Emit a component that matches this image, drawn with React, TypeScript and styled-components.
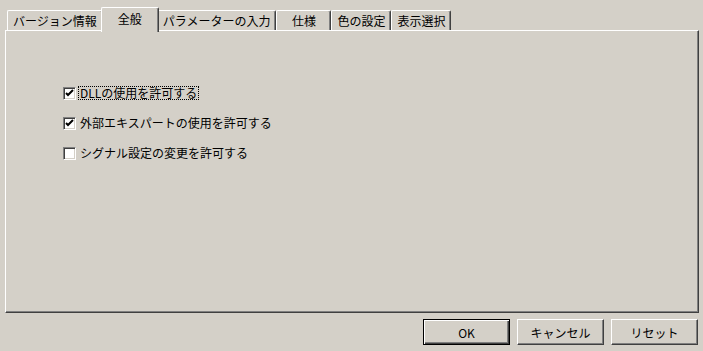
import React from "react";
import styled, { createGlobalStyle, css } from "styled-components";

const Global = createGlobalStyle`
  html, body { margin: 0; padding: 0; background: #d4d0c8; }
  body {
    font-family: "Noto Sans CJK JP", "Liberation Sans", sans-serif;
    font-size: 12px;
    color: #000;
  }
`;

const Frame = styled.div`
  width: 703px;
  height: 351px;
  box-sizing: border-box;
  padding: 7px 4px 0 5px;
  display: flex;
  flex-direction: column;
`;

const TabStrip = styled.div`
  display: flex;
  align-items: flex-end;
  height: 25px;
  padding-left: 2px;
  margin-bottom: -2px;
  position: relative;
  z-index: 1;
`;

const Tab = styled.div<{ $active?: boolean }>`
  box-sizing: border-box;
  min-width: 55px;
  padding: 0 5px;
  display: flex;
  align-items: center;
  justify-content: center;
  white-space: nowrap;
  background: #d4d0c8;
  border-top: 1px solid #fff;
  border-left: 1px solid #fff;
  border-right: 1px solid #404040;
  box-shadow: inset -1px 0 0 #808080;
  border-radius: 2px 2px 0 0;
  height: 20px;
  margin-bottom: 2px;
  line-height: 1;
  padding-top: 1px;
  ${(p) =>
    p.$active &&
    css`
      height: 25px;
      margin: 0 -2px;
      margin-bottom: 0;
      padding: 0 16px 3px;
      position: relative;
      z-index: 2;
    `}
`;

const Panel = styled.div`
  box-sizing: border-box;
  height: 283px;
  border: 1px solid;
  border-color: #fff #404040 #404040 #fff;
  box-shadow: inset -1px -1px 0 #808080;
  padding: 53px 0 0 57px;
  display: flex;
  flex-direction: column;
  gap: 12px;
`;

const Row = styled.label`
  display: flex;
  align-items: center;
  height: 18px;
  gap: 2px;
`;

const Box = styled.span`
  box-sizing: border-box;
  width: 13px;
  height: 13px;
  background: #fff;
  border-top: 1px solid #808080;
  border-left: 1px solid #808080;
  border-right: 1px solid #fff;
  border-bottom: 1px solid #fff;
  box-shadow: inset 1px 1px 0 #404040, inset -1px -1px 0 #d4d0c8;
  display: flex;
  align-items: center;
  justify-content: center;
`;

const Label = styled.span<{ $focused?: boolean }>`
  padding: 0 1px;
  line-height: 12px;
  border: 1px dotted ${(p) => (p.$focused ? "#000" : "transparent")};
`;

const Buttons = styled.div`
  display: flex;
  justify-content: flex-end;
  gap: 7px;
  margin-top: 6px;
  padding-right: 1px;
`;

const Button = styled.button<{ $default?: boolean }>`
  box-sizing: border-box;
  width: 87px;
  height: 26px;
  font: inherit;
  color: #000;
  background: #d4d0c8;
  padding: 0;
  border: 1px solid;
  border-color: #fff #404040 #404040 #fff;
  box-shadow: inset -1px -1px 0 #808080;
  ${(p) =>
    p.$default &&
    css`
      border: 1px solid #000;
      box-shadow: inset 1px 1px 0 #fff, inset -1px -1px 0 #404040,
        inset -2px -2px 0 #808080;
    `}
`;

const Check = () => (
  <svg width="9" height="9" viewBox="0 0 9 9">
    <path d="M1 4 L3 6 L8 1" stroke="#000" strokeWidth="2" fill="none" />
  </svg>
);

const tabs = ["バージョン情報", "全般", "パラメーターの入力", "仕様", "色の設定", "表示選択"];
const options = [
  { text: "DLLの使用を許可する", checked: true, focused: true },
  { text: "外部エキスパートの使用を許可する", checked: true },
  { text: "シグナル設定の変更を許可する", checked: false },
];

export default function App() {
  return (
    <>
      <Global />
      <Frame>
        <TabStrip>
          {tabs.map((t) => (
            <Tab key={t} $active={t === "全般"}>
              {t}
            </Tab>
          ))}
        </TabStrip>
        <Panel>
          {options.map((o) => (
            <Row key={o.text}>
              <Box>{o.checked && <Check />}</Box>
              <Label $focused={o.focused}>{o.text}</Label>
            </Row>
          ))}
        </Panel>
        <Buttons>
          <Button $default>OK</Button>
          <Button>キャンセル</Button>
          <Button>リセット</Button>
        </Buttons>
      </Frame>
    </>
  );
}
